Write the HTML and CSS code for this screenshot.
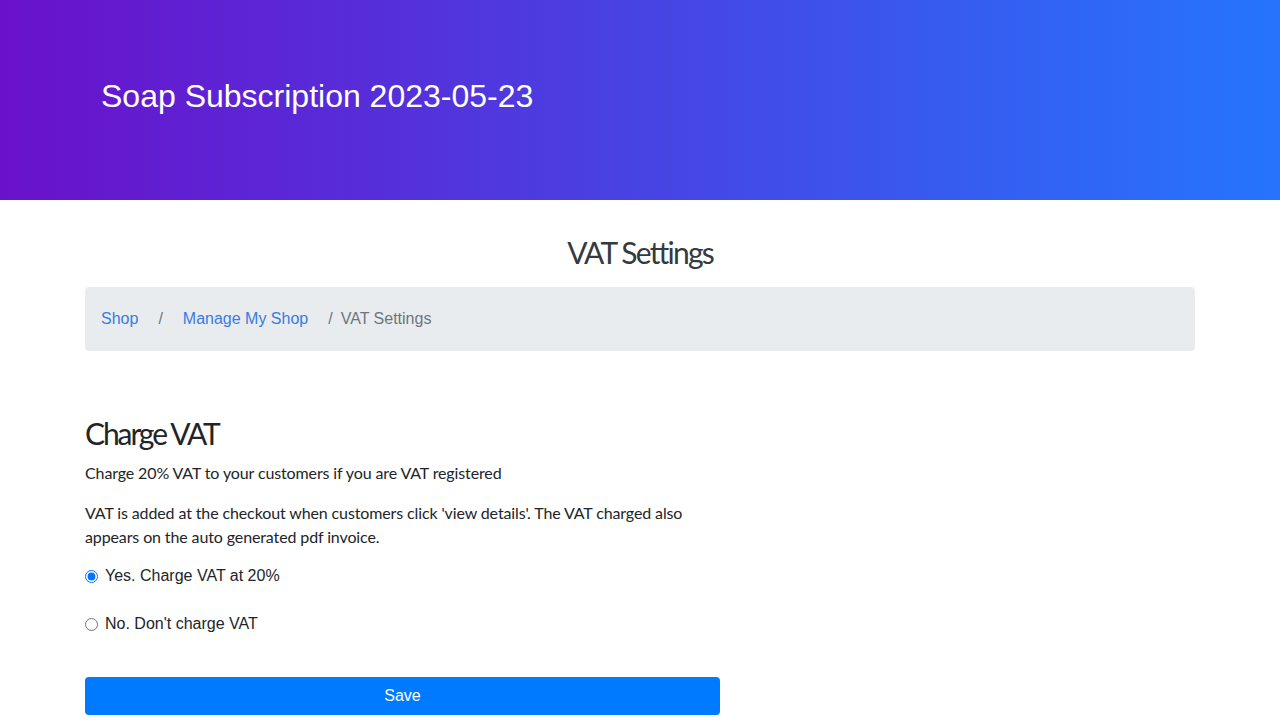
FILE: index.html
```html
<!DOCTYPE html>
<html>
<head>
<meta charset="utf-8">
<link rel="stylesheet" href="styles.css">
</head>
<body>
<header class="hero">
  <div class="container">
    <h1 class="hero-title">Soap Subscription 2023-05-23</h1>
  </div>
</header>
<main class="container">
  <h2 class="page-title">VAT Settings</h2>
  <nav class="breadcrumb">
    <a class="crumb-link" href="#">Shop</a>
    <span class="sep">/</span>
    <a class="crumb-link" href="#">Manage My Shop</a>
    <span class="sep sep-last">/</span>
    <span class="crumb-current">VAT Settings</span>
  </nav>
  <section class="form-col">
    <h3 class="section-title">Charge VAT</h3>
    <p class="text">Charge 20% VAT to your customers if you are VAT registered</p>
    <p class="text">VAT is added at the checkout when customers click 'view details'. The VAT charged also appears on the auto generated pdf invoice.</p>
    <label class="radio-row"><input type="radio" name="vat" checked> Yes. Charge VAT at 20%</label>
    <label class="radio-row"><input type="radio" name="vat"> No. Don't charge VAT</label>
    <button class="save-btn">Save</button>
  </section>
</main>
</body>
</html>
```
FILE: styles.css
```css
* { box-sizing: border-box; }
body {
  margin: 0;
  font-family: "Lato", sans-serif;
  font-size: 16px;
  color: #212529;
  background: #fff;
}
.container {
  width: 1110px;
  margin: 0 auto;
}
.hero {
  height: 200px;
  background: linear-gradient(to right, #6a11cb, #2575fc);
  display: flex;
  align-items: center;
}
.hero-title {
  margin: 0 0 8px 16px;
  font-family: "Liberation Sans", Arial, sans-serif;
  font-weight: 400;
  font-size: 32px;
  color: #fff;
}
.page-title {
  margin: 33px 0 16px;
  text-align: center;
  font-family: "Lato", sans-serif;
  font-weight: 400;
  font-size: 30px;
  letter-spacing: -1.8px;
  color: #343a40;
  line-height: 38px;
}
.breadcrumb {
  height: 64px;
  background: #e9ecef;
  border-radius: 4px;
  display: flex;
  align-items: center;
  padding: 0 16px;
  font-family: "Liberation Sans", Arial, sans-serif;
  font-size: 16px;
}
.crumb-link {
  color: #3a7be0;
  text-decoration: none;
}
.sep {
  color: #6c757d;
  padding: 0 20px;
}
.sep-last { padding: 0 8px 0 20px; }
.crumb-current { color: #6c757d; }
.form-col {
  width: 635px;
  padding-top: 63px;
}
.section-title {
  margin: 0 0 9px;
  font-family: "Lato", sans-serif;
  font-weight: 400;
  font-size: 30px;
  letter-spacing: -2.1px;
  line-height: 38px;
  color: #212529;
}
.text {
  margin: 0 0 16px;
  line-height: 24px;
  letter-spacing: -0.12px;
}
.radio-row {
  display: flex;
  align-items: center;
  gap: 7px;
  height: 24px;
  margin-bottom: 24px;
  font-family: "Liberation Sans", Arial, sans-serif;
  font-size: 16px;
  color: #212529;
}
.text + .radio-row { margin-top: -1px; }
.radio-row input {
  margin: 0;
  width: 13px;
  height: 13px;
}
.save-btn {
  display: block;
  width: 100%;
  height: 38px;
  margin-top: 41px;
  border: none;
  border-radius: 4px;
  background: #007bff;
  color: #fff;
  font-family: "Liberation Sans", Arial, sans-serif;
  font-size: 16px;
}
```
